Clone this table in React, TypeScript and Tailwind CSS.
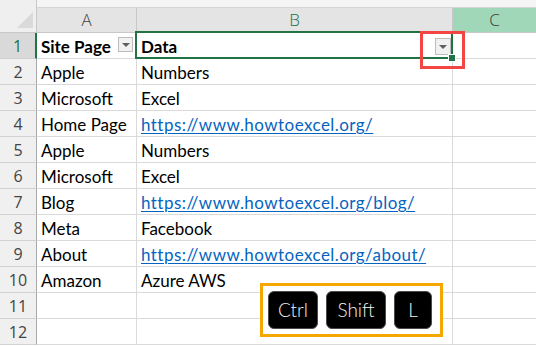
import React from "react";

type Row = { a: string; b: string; link?: boolean };

const rows: Row[] = [
  { a: "Apple", b: "Numbers" },
  { a: "Microsoft", b: "Excel" },
  { a: "Home Page", b: "https://www.howtoexcel.org/", link: true },
  { a: "Apple", b: "Numbers" },
  { a: "Microsoft", b: "Excel" },
  { a: "Blog", b: "https://www.howtoexcel.org/blog/", link: true },
  { a: "Meta", b: "Facebook" },
  { a: "About", b: "https://www.howtoexcel.org/about/", link: true },
  { a: "Amazon", b: "Azure AWS" },
  { a: "", b: "" },
  { a: "", b: "" },
];

function FilterButton({ className }: { className: string }) {
  return (
    <div
      className={
        "absolute flex items-center justify-center border border-[#bdbdbd] bg-[#f1f1f1] " +
        className
      }
    >
      <div className="mt-[1px] h-0 w-0 border-l-[4px] border-r-[4px] border-t-[4px] border-l-transparent border-r-transparent border-t-[#5f5f5f]" />
    </div>
  );
}

function Key({ label, w }: { label: string; w: string }) {
  return (
    <div
      className={
        "flex h-[38px] items-center justify-center rounded-[6px] border border-[#4a4a4a] bg-black text-[19px] font-light text-[#f2f2f2] " +
        w
      }
      style={{ fontFamily: "Lato, 'Open Sans', sans-serif" }}
    >
      {label}
    </div>
  );
}

export default function App() {
  const cellFont = { fontFamily: "Lato, 'Liberation Sans', sans-serif" };
  const hdrFont = { fontFamily: "'Open Sans', 'Noto Sans', sans-serif" };
  return (
    <div className="relative h-[346px] w-[536px] overflow-hidden bg-white">
      {/* header */}
      <div className="flex h-[33px]">
        <div className="relative h-[33px] w-[37px] border-b border-r border-b-[#c8c8c8] border-r-[#c8c8c8] bg-[#efefef]">
          <div className="absolute left-[17px] top-[12px] h-0 w-0 border-b-[16px] border-l-[16px] border-b-[#dadada] border-l-transparent" />
        </div>
        <div className="flex flex-1 flex-col">
          <div className="h-[8px] border-b border-[#d6d6d6] bg-[#f5f5f5]" />
          <div className="flex h-[25px] border-b border-[#c8c8c8] text-[17px]" style={hdrFont}>
            <div className="flex w-[100px] items-center justify-center border-r border-[#c8c8c8] bg-[#e4e4e4] font-light text-[#444444]">
              A
            </div>
            <div className="flex w-[316px] items-center justify-center border-r border-[#c8c8c8] bg-[#e4e4e4] font-light text-[#217346]">
              B
            </div>
            <div className="flex flex-1 items-center justify-center bg-[#a0d7b8] font-light text-[#3a3a3a]">
              C
            </div>
          </div>
        </div>
      </div>

      {/* row 1 */}
      <div className="flex h-[26px] text-[17px] text-black" style={cellFont}>
        <div
          className="flex w-[37px] items-center justify-center border-b border-r-2 border-b-[#cfcfcf] border-r-[#217346] bg-[#d9d9d9] pt-[1px] text-[16px] text-[#217346]"
          style={hdrFont}
        >
          1
        </div>
        <div className="relative flex w-[100px] items-center border-b border-r border-[#dadada] pl-[4px] pt-[2px] font-bold">
          Site Page
          <FilterButton className="left-[81px] top-[4px] h-[15px] w-[15px]" />
        </div>
        <div className="relative flex w-[316px] items-center border-b border-r border-[#dadada] pl-[4px] pt-[2px] font-bold">
          Data
          <FilterButton className="left-[298px] top-[5px] h-[17px] w-[16px]" />
        </div>
        <div className="flex-1 border-b border-[#dadada]" />
      </div>

      {rows.map((r, i) => (
        <div key={i} className="flex h-[26px] text-[17px] text-black" style={cellFont}>
          <div
            className="flex w-[37px] items-center justify-center border-b border-r border-b-[#d2d2d2] border-r-[#a8a8a8] bg-[#f0f0f0] pt-[1px] text-[16px] text-[#444444]"
            style={hdrFont}
          >
            {i + 2}
          </div>
          <div className="flex w-[100px] items-center whitespace-nowrap border-b border-r border-[#dadada] pl-[4px] pt-[2px]">
            {r.a}
          </div>
          <div className="flex w-[316px] items-center whitespace-nowrap border-b border-r border-[#dadada] pl-[4px] pt-[2px]">
            {r.link ? (
              <span className="tracking-[0.45px] text-[#0563c1] underline decoration-1 underline-offset-2">
                {r.b}
              </span>
            ) : (
              r.b
            )}
          </div>
          <div className="flex-1 border-b border-[#dadada]" />
        </div>
      ))}

      {/* selection border on B1 */}
      <div className="absolute left-[135px] top-[31px] h-[28px] w-[318px] border-2 border-[#217346]" />
      <div className="absolute left-[448px] top-[54px] h-[8px] w-[8px] border border-white bg-[#217346]" />

      {/* red highlight */}
      <div className="absolute left-[420px] top-[31px] h-[38px] w-[45px] border-[3px] border-[#f44545]" />

      {/* keyboard shortcut */}
      <div className="absolute left-[260px] top-[283px] flex h-[54px] w-[183px] items-center gap-[8px] border-[3px] border-[#f5a700] bg-white pl-[5px]">
        <Key label="Ctrl" w="w-[50px]" />
        <Key label="Shift" w="w-[60px]" />
        <Key label="L" w="w-[38px]" />
      </div>
    </div>
  );
}
